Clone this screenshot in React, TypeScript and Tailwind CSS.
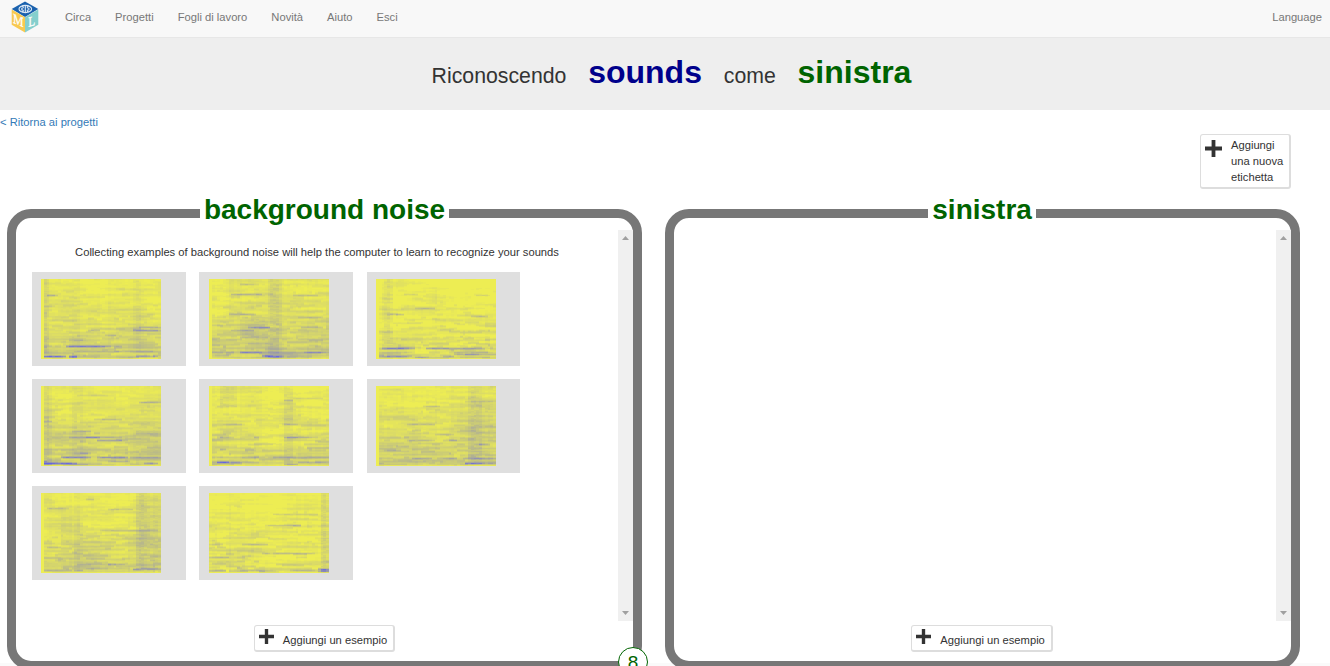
import React, { useMemo } from 'react';

type Streak = [x0: number, x1: number, y: number, strength: number];
type Band = [x0: number, x1: number, y0: number, y1: number, strength: number];

interface Sample {
  seed: number;
  top: number;
  bottom: number;
  edge: boolean;
  streaks: Streak[];
  bands: Band[];
}

const samples: Sample[] = [
  {
    seed: 11, top: 0.04, bottom: 0.27, edge: true,
    streaks: [[92, 120, 51, 0.4], [98, 120, 48, 0.35], [47, 60, 51, 0.3], [25, 70, 67, 0.6], [70, 82, 67, 0.25], [2, 24, 77, 0.75], [28, 37, 77, 0.6], [28, 37, 78, 0.4], [94, 118, 77, 0.3], [33, 120, 72, 0.22], [65, 76, 56, 0.3], [28, 46, 61, 0.25], [5, 16, 16, 0.4], [4, 14, 27, 0.2]],
    bands: [[2, 8, 0, 76, 0.16], [92, 102, 0, 70, 0.08], [28, 40, 0, 78, 0.05]],
  },
  {
    seed: 23, top: 0.09, bottom: 0.3, edge: true,
    streaks: [[22, 54, 15, 0.35], [30, 49, 5, 0.22], [85, 110, 16, 0.25], [20, 48, 35, 0.3], [40, 62, 48, 0.4], [22, 46, 51, 0.25], [92, 115, 48, 0.25], [90, 112, 38, 0.25], [30, 52, 73, 0.4], [2, 120, 73, 0.16], [53, 76, 77, 0.6], [53, 62, 76, 0.5], [76, 95, 77, 0.3], [95, 120, 73, 0.25], [30, 60, 58, 0.2], [2, 14, 46, 0.2]],
    bands: [[58, 72, 0, 80, 0.12], [30, 60, 38, 65, 0.08], [2, 19, 0, 40, -0.08]],
  },
  {
    seed: 37, top: 0.02, bottom: 0.18, edge: true,
    streaks: [[5, 38, 69, 0.5], [50, 110, 69, 0.4], [110, 120, 69, 0.25], [4, 35, 77, 0.45], [4, 9, 76, 0.4], [38, 52, 78, 0.3], [68, 78, 77, 0.35], [78, 120, 75, 0.38], [78, 120, 73, 0.25], [90, 102, 75, 0.25], [11, 28, 35, 0.3], [28, 42, 15, 0.22], [40, 58, 29, 0.25], [95, 112, 37, 0.28], [44, 50, 38, 0.25], [100, 114, 16, 0.24], [2, 40, 73, 0.2]],
    bands: [[5, 17, 0, 67, 0.11], [60, 120, 0, 25, -0.05]],
  },
  {
    seed: 43, top: 0.06, bottom: 0.33, edge: true,
    streaks: [[98, 120, 16, 0.35], [35, 66, 9, 0.15], [52, 82, 33, 0.22], [2, 11, 35, 0.3], [45, 60, 51, 0.4], [28, 80, 51, 0.2], [55, 86, 54, 0.25], [32, 50, 45, 0.3], [20, 50, 71, 0.5], [57, 86, 71, 0.55], [90, 120, 71, 0.3], [2, 36, 77, 0.6], [2, 5, 75, 0.5], [68, 90, 75, 0.3], [104, 117, 77, 0.45], [38, 48, 67, 0.3], [95, 120, 47, 0.2]],
    bands: [[2, 10, 0, 80, 0.14], [30, 43, 0, 70, 0.06], [92, 120, 35, 75, 0.07]],
  },
  {
    seed: 59, top: 0.05, bottom: 0.24, edge: true,
    streaks: [[75, 102, 51, 0.45], [102, 110, 51, 0.25], [75, 85, 14, 0.3], [83, 115, 12, 0.2], [10, 25, 51, 0.28], [44, 51, 51, 0.35], [8, 20, 76, 0.6], [8, 50, 76, 0.25], [75, 89, 78, 0.35], [89, 120, 76, 0.25], [6, 50, 71, 0.2], [60, 120, 71, 0.2], [10, 17, 63, 0.35], [15, 33, 38, 0.22], [75, 90, 38, 0.2], [8, 28, 20, 0.2]],
    bands: [[10, 28, 0, 20, 0.1], [75, 84, 0, 80, 0.09], [52, 74, 0, 60, -0.06]],
  },
  {
    seed: 67, top: 0.05, bottom: 0.31, edge: true,
    streaks: [[89, 108, 77, 0.65], [108, 120, 77, 0.35], [3, 8, 77, 0.4], [36, 57, 72, 0.3], [66, 81, 72, 0.35], [48, 64, 20, 0.28], [32, 60, 38, 0.25], [90, 120, 15, 0.18], [30, 58, 54, 0.25], [72, 82, 54, 0.3], [8, 25, 64, 0.25], [99, 111, 58, 0.25], [87, 120, 72, 0.3], [3, 28, 3, 0.1], [60, 78, 48, 0.2]],
    bands: [[92, 108, 0, 76, 0.13], [108, 120, 0, 76, 0.06], [28, 45, 30, 80, 0.04]],
  },
  {
    seed: 79, top: 0.05, bottom: 0.27, edge: true,
    streaks: [[93, 101, 76, 0.6], [101, 120, 76, 0.35], [33, 42, 77, 0.35], [5, 27, 15, 0.3], [67, 92, 16, 0.25], [60, 118, 37, 0.2], [5, 20, 54, 0.25], [20, 40, 51, 0.2], [36, 70, 71, 0.2], [68, 85, 71, 0.25], [2, 30, 77, 0.25], [46, 90, 75, 0.16], [10, 18, 44, 0.2], [45, 54, 6, 0.25]],
    bands: [[94, 108, 0, 76, 0.16], [108, 120, 0, 76, 0.1], [33, 41, 0, 76, 0.05]],
  },
  {
    seed: 97, top: 0.01, bottom: 0.18, edge: false,
    streaks: [[55, 92, 32, 0.3], [83, 92, 32, 0.2], [63, 109, 21, 0.22], [0, 14, 51, 0.35], [33, 58, 51, 0.3], [53, 62, 60, 0.3], [62, 105, 60, 0.25], [0, 20, 64, 0.3], [109, 120, 76, 0.65], [109, 120, 78, 0.5], [0, 18, 77, 0.35], [17, 30, 73, 0.2], [30, 68, 77, 0.22], [80, 105, 77, 0.22], [50, 57, 78, 0.3], [0, 8, 47, 0.25]],
    bands: [[111, 120, 0, 80, 0.18], [17, 23, 30, 80, 0.05]],
  },
];

const COLS = 43;
const ROWS = 80;
const CELL = 120 / COLS;
const LEVELS = 48;

function makeRandom(seed: number) {
  let s = seed * 7919 + 1;
  return () => {
    s = (s + 0x6d2b79f5) | 0;
    let t = Math.imul(s ^ (s >>> 15), 1 | s);
    t = (t + Math.imul(t ^ (t >>> 7), 61 | t)) ^ t;
    return ((t ^ (t >>> 14)) >>> 0) / 4294967296;
  };
}

function buildNoise(sample: Sample, random: () => number): number[][] {
  const columnGain = Array.from({ length: COLS }, () => (random() - 0.5) * 0.03);
  const patches = Array.from({ length: 9 }, () => Array.from({ length: 7 }, () => (random() - 0.5) * 0.1));
  const grid: number[][] = [];
  for (let y = 0; y < ROWS; y++) {
    const depth = y / ROWS;
    const base = sample.top + (sample.bottom - sample.top) * Math.pow(depth, 1.1) * 0.82;
    const rowGain = (random() - 0.5) * (0.03 + depth * 0.07);
    const amount = 0.14 + depth * 0.26;
    let drift = Math.pow(random(), 2);
    const row: number[] = [];
    for (let c = 0; c < COLS; c++) {
      if (random() < 0.2) drift = Math.pow(random(), 2);
      const px = (c / COLS) * 6;
      const py = depth * 8;
      const ix = Math.floor(px);
      const iy = Math.floor(py);
      const fx = px - ix;
      const fy = py - iy;
      const upper = patches[iy][ix] * (1 - fx) + patches[iy][Math.min(6, ix + 1)] * fx;
      const lower = patches[iy + 1][ix] * (1 - fx) + patches[iy + 1][Math.min(6, ix + 1)] * fx;
      const patch = upper * (1 - fy) + lower * fy;
      row.push(base + rowGain + columnGain[c] + patch + (drift - 0.33) * amount + (random() - 0.5) * 0.04);
    }
    grid.push(row);
  }
  return grid;
}

function buildPaths(sample: Sample): string[] {
  const random = makeRandom(sample.seed);
  const noise = buildNoise(sample, random);
  const paths: string[] = Array.from({ length: LEVELS }, () => '');
  for (let y = 0; y < ROWS; y++) {
    const above = noise[Math.max(0, y - 1)];
    const below = noise[Math.min(ROWS - 1, y + 1)];
    let start = 0;
    let previous = -1;
    for (let c = 0; c <= COLS; c++) {
      let level = -2;
      if (c < COLS) {
        const x = (c + 0.5) * CELL;
        let v = noise[y][c] * 0.5 + above[c] * 0.25 + below[c] * 0.25;
        for (const [x0, x1, y0, y1, k] of sample.bands) {
          if (y < y0 || y >= y1) continue;
          const inside = Math.min(x - x0, x1 - x);
          if (inside > 0) v += k * Math.min(1, 0.45 + inside / 8) * (0.7 + random() * 0.5);
        }
        for (const [x0, x1, sy, k] of sample.streaks) {
          if (x < x0 || x >= x1) continue;
          const fade = Math.min(1, 0.6 + Math.min(x - x0, x1 - x) / 14);
          if (y === sy) v += k * fade * (0.75 + random() * 0.3);
          else if (Math.abs(y - sy) === 1) v += k * fade * 0.35;
        }
        if (y === ROWS - 1) v *= 0.35;
        if (sample.edge && c === 0) v = 0.01;
        level = Math.max(0, Math.min(LEVELS - 1, Math.round(Math.max(0.03, v) * (LEVELS - 1))));
      }
      if (level !== previous) {
        if (previous >= 0) {
          const x0 = (start * CELL).toFixed(2);
          const x1 = (c * CELL).toFixed(2);
          paths[previous] += `M${x0} ${y}H${x1}v1H${x0}z`;
        }
        previous = level;
        start = c;
      }
    }
  }
  return paths;
}

function levelColor(level: number) {
  const v = level / (LEVELS - 1);
  const rg = Math.round(240 - 140 * v);
  return `rgb(${rg},${rg},${Math.round(80 + 145 * v)})`;
}

function Spectrogram({ sample }: { sample: Sample }) {
  const paths = useMemo(() => buildPaths(sample), [sample]);
  return (
    <svg width="120" height="80" viewBox="0 0 120 80" shapeRendering="crispEdges" className="block">
      <rect width="120" height="80" fill="#e6e65a" />
      {paths.map((d, i) => (d ? <path key={i} d={d} fill={levelColor(i)} /> : null))}
    </svg>
  );
}

function Plus({ size }: { size: number }) {
  return (
    <svg width={size} height={size} viewBox="0 0 17 17" className="block shrink-0">
      <path d="M6.6 0h3.8v6.6H17v3.8h-6.6V17H6.6v-6.6H0V6.600h6.600z" fill="#333" />
    </svg>
  );
}

function Logo() {
  return (
    <svg width="28" height="32" viewBox="0 0 28 32" className="block">
      <path d="M14 .5 27.3 8 14 16 .7 8z" fill="#1b62ae" />
      <path d="M.7 8.400 14 16.300v15.200L.7 23.800z" fill="#f8c950" />
      <path d="M27.3 8.400 14 16.300v15.200l13.300-7.700z" fill="#85cfcd" />
      <g fill="none" stroke="#dce8f5" strokeWidth="1.100">
        <ellipse cx="14.300" cy="8" rx="6.300" ry="3.600" />
        <path d="M14.300 4.500v7M11 5c2.200.8 1.800 2.200-.8 2.400M11 11c2.200-.8 1.800-2.200-.8-2.400M17.600 5c-2.200.8-1.800 2.200.8 2.400M17.600 11c-2.200-.8-1.800-2.200.8-2.400" />
      </g>
      <text transform="matrix(1 .42 0 1 2 21.800)" fontFamily="Liberation Serif, serif" fontWeight="400" fontSize="14" textLength="10.500" lengthAdjust="spacingAndGlyphs" fill="#fff" stroke="#fff" strokeWidth=".3">M</text>
      <text transform="matrix(1 -.3 0 1 17.300 26)" fontFamily="Liberation Serif, serif" fontWeight="400" fontSize="14" textLength="7" lengthAdjust="spacingAndGlyphs" fill="#fff" stroke="#fff" strokeWidth=".3">L</text>
    </svg>
  );
}

function Scrollbar() {
  return (
    <div className="flex h-[391px] w-[15px] shrink-0 flex-col items-center justify-between bg-[#f0f0f0] pt-[6px] pb-[6px]">
      <svg width="7" height="4" viewBox="0 0 7 4" className="block"><path d="M0 4 3.500 0 7 4z" fill="#a0a0a0" /></svg>
      <svg width="7" height="4" viewBox="0 0 7 4" className="block"><path d="M0 0h7L3.500 4z" fill="#a0a0a0" /></svg>
    </div>
  );
}

interface PanelProps {
  title: string;
  count?: number;
  children?: React.ReactNode;
}

function Panel({ title, count, children }: PanelProps) {
  return (
    <section className="relative h-[461px] w-[635px] shrink-0 rounded-[24px] border-[9px] border-[#777]">
      <h2 className="mx-auto -mt-[24px] h-[36px] w-fit bg-white px-1 text-[28px] leading-[32px] font-bold whitespace-nowrap text-[#006400]">
        {title}
      </h2>
      <div className="flex h-[391px]">
        <div className="min-w-0 flex-1">{children}</div>
        <Scrollbar />
      </div>
      <button className="mx-auto mt-[4px] flex h-[27px] w-fit items-start rounded-[3px] border border-r-2 border-b-2 border-[#ddd] bg-white pt-[3px] pr-[6px] pl-[4px]">
        <Plus size={15} />
        <span className="ml-[9px] pt-[3px] leading-4 whitespace-nowrap">Aggiungi un esempio</span>
      </button>
      {count !== undefined && (
        <span className="absolute -right-[15px] -bottom-[16px] flex h-[30px] w-[30px] items-center justify-center rounded-full border border-[#006400] bg-white text-[19px] leading-none text-[#006400]">
          {count}
        </span>
      )}
    </section>
  );
}

const links = ['Circa', 'Progetti', 'Fogli di lavoro', 'Novità', 'Aiuto', 'Esci'];

export default function App() {
  return (
    <div className="h-[666px] w-[1330px] overflow-hidden bg-white font-['Liberation_Sans',Arial,sans-serif] text-[11.2px] text-[#333]">
      <nav className="flex h-[38px] items-start border-b border-[#e7e7e7] bg-[#f8f8f8] pr-2 pl-[11px] text-[#777]">
        <div className="pt-[1px]"><Logo /></div>
        <div className="ml-[26px] flex gap-6 pt-[9px] leading-4">
          {links.map((link) => <a key={link}>{link}</a>)}
        </div>
        <a className="ml-auto pt-[9px] leading-4">Language</a>
      </nav>

      <header className="flex h-[72px] items-baseline justify-center gap-[21.8px] bg-[#eee] pt-[16px] pl-[13px] text-[21.28px]">
        <span>Riconoscendo</span>
        <strong className="text-[32px] leading-9 text-[#00008b]">sounds</strong>
        <span>come</span>
        <strong className="text-[32px] leading-9 text-[#006400]">sinistra</strong>
      </header>

      <a className="block pt-1 leading-4 text-[#337ab7]">&lt; Ritorna ai progetti</a>

      <div className="mt-[4px] flex justify-end pr-[39px]">
        <button className="flex h-[55px] w-[91px] items-start rounded-[3px] border border-r-2 border-b-2 border-[#ddd] bg-white pt-[5px] pl-[4px] text-left">
          <Plus size={17} />
          <span className="-mt-[3px] ml-[9px] leading-4">Aggiungi<br />una nuova<br />etichetta</span>
        </button>
      </div>

      <main className="mt-[20px] flex gap-[22.6px] pl-[7px]">
        <Panel title="background noise" count={8}>
          <p className="pt-[14px] text-center leading-4">
            Collecting examples of background noise will help the computer to learn to recognize your sounds
          </p>
          <div className="mt-[12px] ml-[16px] grid grid-cols-[167px_168px_153px] gap-y-[13px]">
            {samples.map((sample, i) => (
              <div
                key={sample.seed}
                className={`h-[94px] bg-[#dfdfdf] pt-[7px] ${i % 3 === 2 ? 'w-[153px] pl-[9px]' : i % 3 === 1 ? 'w-[154px] pl-[10px]' : 'w-[154px] pl-[9px]'}`}
              >
                <Spectrogram sample={sample} />
              </div>
            ))}
          </div>
        </Panel>
        <Panel title="sinistra" />
      </main>
      <footer className="-mt-[7px] h-[3px] bg-[#fafafa]" />
    </div>
  );
}
